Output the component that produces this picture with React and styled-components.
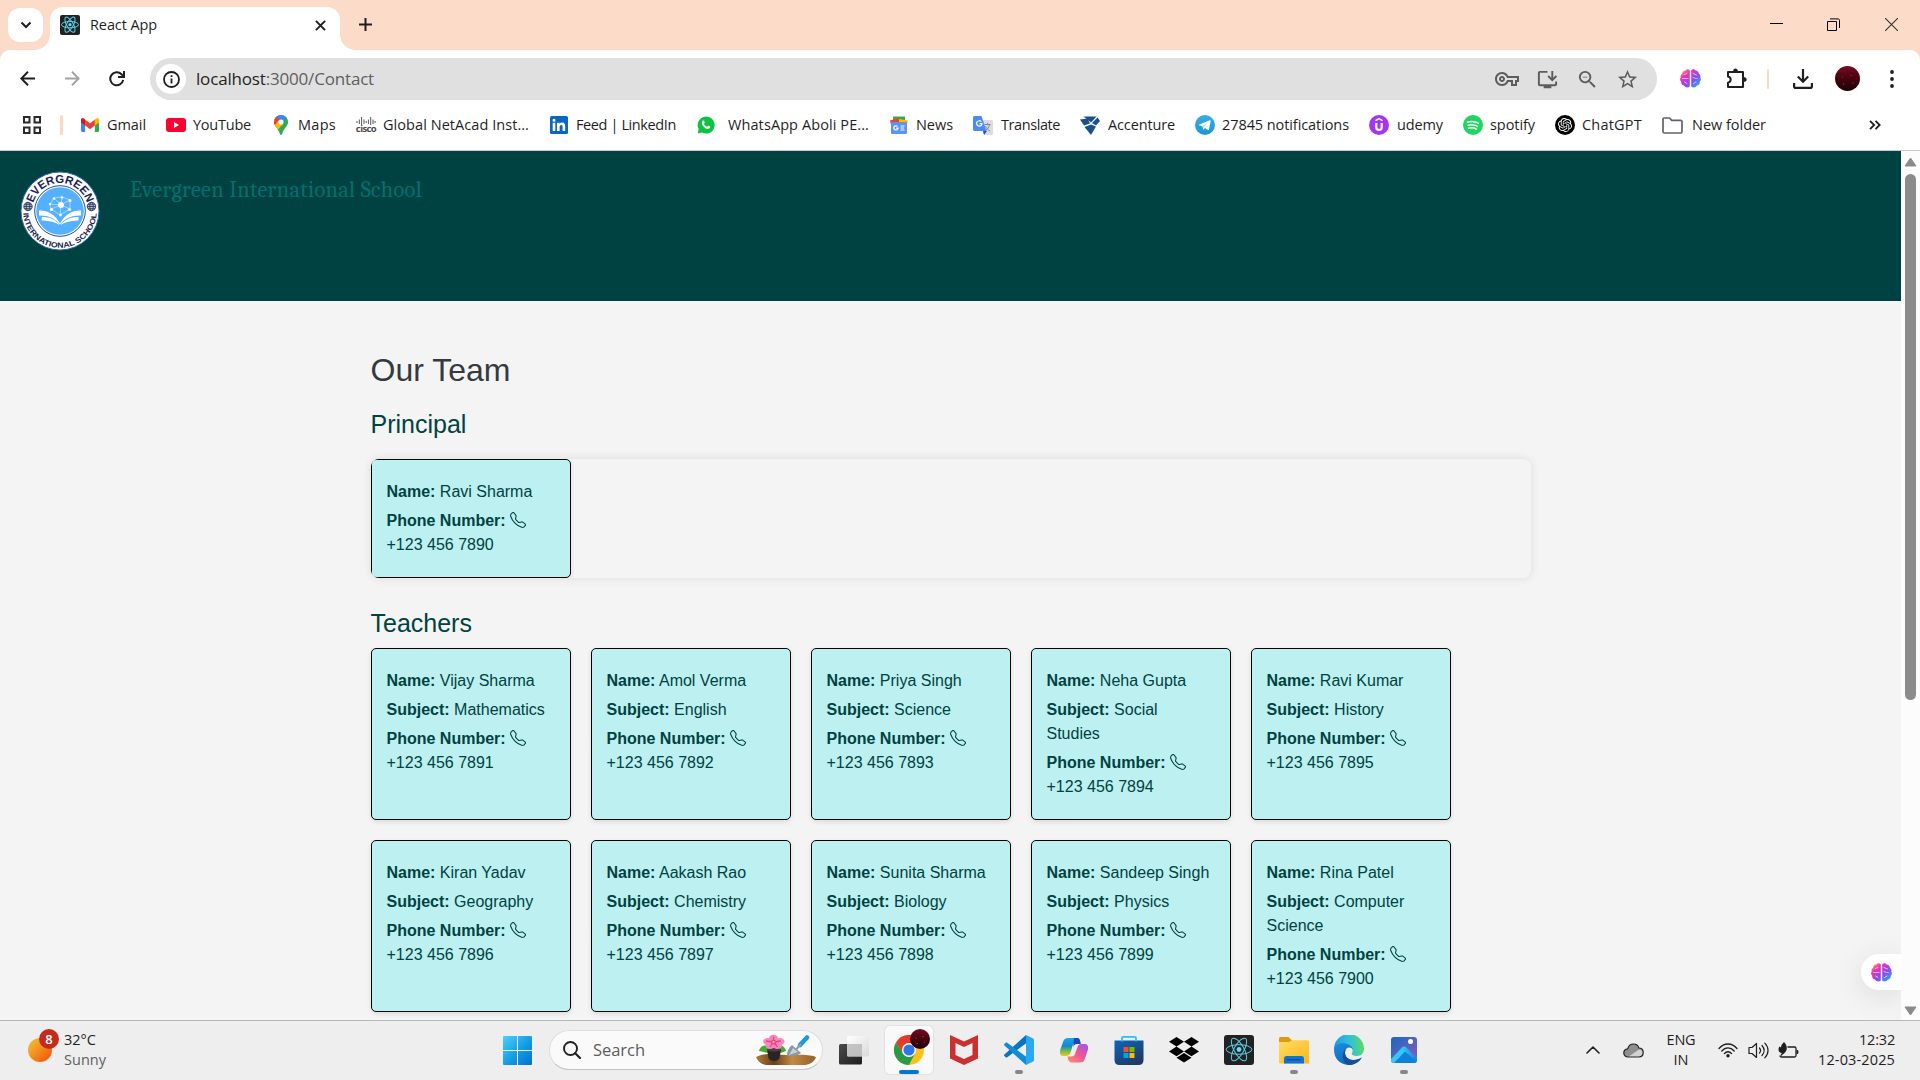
import React, { useLayoutEffect, useRef } from "react";
import styled, { createGlobalStyle, css } from "styled-components";
import { BsTelephone } from "react-icons/bs";
import { SiOpenai } from "react-icons/si";
import {
  MdStarBorder,
  MdOutlineVpnKey,
  MdZoomOut,
  MdInstallDesktop,
} from "react-icons/md";

const UI_FONT = `"Segoe UI", "Open Sans", "Noto Sans", sans-serif`;

const GlobalStyle = createGlobalStyle`
  *, *::before, *::after { box-sizing: border-box; }
  html, body { margin: 0; padding: 0; overflow: hidden; }
  svg { display: block; flex: none; }
`;

/* ---------- shared ---------- */

const FitSpan = styled.span`
  display: inline-block;
  white-space: nowrap;
  font-size: ${(p) => p.$size}px;
  line-height: ${(p) => p.$line || 20}px;
  color: ${(p) => p.$color || "#1f1f1f"};
  font-family: ${(p) => p.$font || UI_FONT};
`;

const FitBox = styled.span`
  display: block;
  flex: none;
  width: ${(p) => p.$w}px;
  white-space: nowrap;
`;

/* Tracks its text so that the label takes up exactly the given width. */
function Fit({ w, size, color, line, font, children }) {
  const ref = useRef(null);
  useLayoutEffect(() => {
    const el = ref.current;
    el.style.letterSpacing = "0px";
    const natural = el.getBoundingClientRect().width;
    el.style.letterSpacing = `${(w - natural) / el.textContent.length}px`;
  }, [w]);
  return (
    <FitBox $w={w}>
      <FitSpan ref={ref} $size={size} $color={color} $line={line} $font={font}>
        {children}
      </FitSpan>
    </FitBox>
  );
}

const Slot = styled.div`
  display: flex;
  align-items: center;
  justify-content: center;
  flex: none;
  width: ${(p) => p.$w || 25}px;
  height: ${(p) => p.$h || 25}px;
  margin-left: ${(p) => p.$ml || 0}px;
  margin-top: ${(p) => p.$mt || 0}px;
`;

const Screen = styled.div`
  width: 1920px;
  height: 1080px;
  display: flex;
  flex-direction: column;
  overflow: hidden;
  background: #f4f4f4;
`;

/* ---------- icons ---------- */

const ReactLogo = ({ size, sw }) => (
  <svg width={size} height={size} viewBox="0 0 30 30">
    <rect width="30" height="30" rx="3" fill="#222" />
    <g fill="none" stroke="#5ccfe6" strokeWidth={sw}>
      <ellipse cx="15" cy="14.5" rx="12.8" ry="4.8" />
      <ellipse cx="15" cy="14.5" rx="12.8" ry="4.8" transform="rotate(60 15 14.5)" />
      <ellipse cx="15" cy="14.5" rx="12.8" ry="4.8" transform="rotate(120 15 14.5)" />
    </g>
    <circle cx="15" cy="14.5" r="2.4" fill="#61dafb" />
  </svg>
);

const Brain = ({ id }) => (
  <svg width="21" height="19" viewBox="0 0 21 19">
    <defs>
      <linearGradient id={id} x1="0" y1="0" x2="1" y2="1">
        <stop offset="0.08" stopColor="#f9a03c" />
        <stop offset="0.3" stopColor="#ee2fc0" />
        <stop offset="0.6" stopColor="#8a4bf0" />
        <stop offset="0.9" stopColor="#2ba4ff" />
      </linearGradient>
    </defs>
    <path
      fill={`url(#${id})`}
      d="M9.8 1.2C8.6-.2 6.3-.1 5.5 1.4 3.6 1.3 2 2.9 2.2 4.8.8 5.6.2 7.1.7 8.6-.3 10 0 11.8 1.2 12.8 1 14.7 2.3 16.2 4 16.5 5 18.6 8.2 19.200 9.800 17.500ZM11.200 1.200C12.400-.2 14.700-.1 15.500 1.400 17.400 1.300 19 2.900 18.800 4.800 20.200 5.600 20.800 7.100 20.300 8.600 21.300 10 21 11.800 19.800 12.800 20 14.700 18.700 16.200 17 16.500 16 18.600 12.800 19.200 11.200 17.500Z"
    />
    <path
      fill="none"
      stroke="#fff"
      strokeOpacity=".7"
      strokeWidth=".9"
      strokeLinecap="round"
      d="M2.500 9.500H8M4.500 5.500L7 4.500M4.500 13L7 14.500M13 4.500L16.500 6M13 8.500C15 10 16 9 17.500 9.500M13.500 14.500L16 13"
    />
  </svg>
);

const GmailIcon = () => (
  <svg width="18" height="14" viewBox="0 0 18 14">
    <path fill="#4285f4" d="M0 3v9.800C0 13.500.5 14 1.200 14H4.100V5.500Z" />
    <path fill="#34a853" d="M18 3v9.800c0 .7-.5 1.200-1.200 1.200H13.900V5.500Z" />
    <path fill="#ea4335" d="M4.100 7.500V1.600L9 5.300l4.900-3.700v5.900L9 11.200Z" />
    <path fill="#c5221f" d="M0 1.800C0 .2 1.800-.6 3.100.7L4.100 1.600V7.500L0 4.400Z" />
    <path fill="#fbbc04" d="M18 1.800C18 .2 16.200-.6 14.900.7l-1 .9V7.500L18 4.400Z" />
  </svg>
);

const YouTubeIcon = () => (
  <svg width="20" height="14" viewBox="0 0 20 14">
    <rect width="20" height="14" rx="3" fill="#ff0033" />
    <path d="M8 4v6l5-3Z" fill="#fff" />
  </svg>
);

const MapsIcon = () => (
  <svg width="14" height="20" viewBox="0 0 14 20">
    <defs>
      <clipPath id="pin">
        <path d="M7 0a7 7 0 0 1 7 7c0 4-3.300 5.600-5 9.500C8.200 18.400 8 20 7 20s-1.200-1.600-2-3.500C3.300 12.600 0 11 0 7a7 7 0 0 1 7-7Z" />
      </clipPath>
    </defs>
    <g clipPath="url(#pin)">
      <rect width="14" height="20" fill="#34a853" />
      <path d="M0 0H14V3L9 9 4 5 0 2Z" fill="#4285f4" />
      <path d="M13 1L14 8 4 17 8 9Z" fill="#34a853" />
      <path d="M-1 2L2 1.500 7 6 1 13-1 9Z" fill="#ea4335" />
      <path d="M0 11L5 5 9 9 3 15.500Z" fill="#fbbc04" />
    </g>
    <circle cx="7" cy="7" r="2.600" fill="#fff" />
  </svg>
);

const CiscoText = styled.span`
  font: bold 9.5px/8px "Open Sans", sans-serif;
  letter-spacing: -0.6px;
  color: #4a4a4a;
`;
const CiscoBox = styled.span`
  display: flex;
  flex-direction: column;
  align-items: center;
`;
const CiscoIcon = () => (
  <CiscoBox>
    <svg width="20" height="8" viewBox="0 0 20 8">
      <path
        d="M1 4v2M3.300 2.500V7M5.600 0V8M8 2.500V7M10.200 4V6M12.400 2.500V7M14.700 0V8M17 2.500V7M19 4V6"
        stroke="#555"
        strokeWidth="1"
      />
    </svg>
    <CiscoText>cisco</CiscoText>
  </CiscoBox>
);

const LinkedInIcon = () => (
  <svg width="18" height="18" viewBox="0 0 18 18">
    <rect width="18" height="18" rx="1.500" fill="#0a66c2" />
    <path
      fill="#fff"
      d="M2.700 6.800h2.600V15H2.700ZM4 2.700a1.500 1.500 0 1 1 0 3 1.500 1.500 0 0 1 0-3ZM7 6.800h2.500v1.100C9.900 7.200 10.800 6.600 12 6.600c2.600 0 3.200 1.700 3.200 4V15h-2.600v-3.900c0-1-.1-2.200-1.400-2.200S9.600 10 9.600 11v4H7Z"
    />
  </svg>
);

const WhatsIcon = () => (
  <svg width="18" height="18" viewBox="0 0 18 18">
    <path d="M.6 17.600L1.700 13.200A8.500 8.500 0 1 1 5 16.500Z" fill="#0fc143" />
    <path
      d="M6.200 4.500c.5-.1.700.1.900.6l.6 1.400c.1.400-.6 1-.8 1.300.6 1.300 1.600 2.300 3.200 3 .4-.4.900-1.200 1.300-1.100l1.800.9c.3.600-.3 2.300-2.200 2.400C8 12.900 4.900 9.400 4.900 6.700c0-1.100.6-2 1.300-2.200Z"
      fill="#fff"
    />
  </svg>
);

const NewsIcon = () => (
  <svg width="18" height="18" viewBox="0 0 18 18">
    <path d="M3 .5h12v6H3Z" fill="#34a853" />
    <path d="M0 4.500L9 2l1 4-9 3Z" fill="#ea4335" />
    <path d="M9 3L18 4.500l-1 4-8-2Z" fill="#fbbc04" />
    <rect x="1" y="6" width="16" height="12" rx="1.200" fill="#5b94f5" />
    <path
      d="M7.500 10.500a2.100 2.100 0 1 0 .5 1.600H6.200M10.500 10H14.500M10.500 12H14M10.500 14H14.500"
      fill="none"
      stroke="#fff"
      strokeWidth="1.200"
    />
  </svg>
);

const TranslateIcon = () => (
  <svg width="20" height="19" viewBox="0 0 20 19">
    <path d="M7 4h11.500c.8 0 1.500.6 1.500 1.400V17.500c0 .8-.7 1.400-1.500 1.400H11Z" fill="#dcdcdc" />
    <path d="M11.500 8.500h6M14.500 7v1.500M16.500 8.500c-.5 3-2 4.500-4 6M12.500 10c1 2.500 2.500 4 4.500 5" fill="none" stroke="#7b8794" strokeWidth="1" />
    <path d="M10 15h4l-3 4Z" fill="#3246c8" />
    <path d="M1.400 0H8.500L13.500 15H1.400C.6 15 0 14.400 0 13.600V1.400C0 .6.600 0 1.400 0Z" fill="#4c8bf5" />
    <path d="M8.300 5.600a2.700 2.700 0 1 0 .7 2H6.500" fill="none" stroke="#fff" strokeWidth="1.200" />
  </svg>
);

const AccentureIcon = () => (
  <svg width="20" height="19" viewBox="0 0 20 19">
    <g fill="#1c4f8f">
      <path d="M3.500.5H16.500L11 6.500Z" />
      <path d="M0 3.500L7.500 2.500 10 7.500 4 9.500Z" />
      <path d="M17.500 1.500L20 5 16 9.500 12 7Z" />
      <path d="M4.500 11L11 8.500 16 10.500 11 19Z" />
    </g>
  </svg>
);

const Disc = styled.span`
  display: flex;
  align-items: center;
  justify-content: center;
  width: 20px;
  height: 20px;
  border-radius: 50%;
  background: ${(p) => p.$bg};
  color: #fff;
`;

const TelegramIcon = () => (
  <Disc $bg="linear-gradient(#37aee2,#1e96d4)">
    <svg width="20" height="20" viewBox="0 0 20 20">
      <path
        fill="#fff"
        d="M4 9.700L14.800 5.300c.6-.2 1 .1.900.8l-1.800 8.500c-.1.600-.6.700-1 .4L10.100 13l-1.400 1.400c-.2.200-.4.200-.5-.2L7.300 11.200 4 10.300c-.4-.1-.4-.4 0-.6Z"
      />
      <path d="M7.800 11L13.300 7.300 9 11.700 8.500 13.500Z" fill="#a9d3ec" />
    </svg>
  </Disc>
);

const UdemyIcon = () => (
  <Disc $bg="#a435f0">
    <svg width="20" height="20" viewBox="0 0 20 20">
      <path d="M6.500 5.700L10 3.700l3.500 2" fill="none" stroke="#fff" strokeWidth="1.500" />
      <path d="M7.300 8v4.300a2.700 2.700 0 0 0 5.400 0V8" fill="none" stroke="#fff" strokeWidth="2.200" />
    </svg>
  </Disc>
);

const SpotifyIcon = () => (
  <Disc $bg="#1ed760">
    <svg width="20" height="20" viewBox="0 0 20 20">
      <path
        d="M4.500 7.300c4-1.200 7.700-.8 11 1M5 10.400c3.300-1 6.600-.6 9.400 1M5.500 13.300c2.800-.8 5.400-.5 7.900.9"
        fill="none"
        stroke="#fff"
        strokeWidth="1.500"
        strokeLinecap="round"
      />
    </svg>
  </Disc>
);

const ChatGptIcon = () => (
  <Disc $bg="#000">
    <SiOpenai size={14} />
  </Disc>
);

const FolderOutline = () => (
  <svg width="21" height="17" viewBox="0 0 21 17">
    <path
      d="M1 14.300V2.300C1 1.600 1.500 1 2.200 1H7.500L9.700 3.400h8.900c.8 0 1.400.6 1.400 1.300v9.600c0 .9-.6 1.700-1.400 1.700H2.400C1.600 16 1 15.200 1 14.300Z"
      fill="none"
      stroke="#5f6368"
      strokeWidth="1.700"
    />
  </svg>
);

const GardenAvatar = styled.span`
  display: block;
  width: ${(p) => p.$d}px;
  height: ${(p) => p.$d}px;
  border-radius: 50%;
  background:
    radial-gradient(circle at 35% 72%, #8a1828 0 0.5px, transparent 1px),
    radial-gradient(circle at 65% 38%, #9c1c32 0 0.5px, transparent 1px),
    radial-gradient(circle at 72% 68%, #7c1422 0 0.5px, transparent 1px),
    radial-gradient(circle at 30% 45%, #861626 0 0.5px, transparent 1px),
    linear-gradient(#780c20, #4b0410 45%, #1c0205);
`;

/* ---------- browser chrome ---------- */

const TabStrip = styled.div`
  height: 50px;
  flex: none;
  display: flex;
  align-items: flex-start;
  padding-left: 8px;
  background: #fcdbc8;
`;

const TabSearch = styled.div`
  width: 35px;
  height: 34px;
  margin-top: 8px;
  border-radius: 12px;
  background: #fff;
  display: flex;
  align-items: center;
  justify-content: center;
`;

const curve = css`
  content: "";
  position: absolute;
  bottom: 0;
  width: 15px;
  height: 15px;
`;

const Tab = styled.div`
  position: relative;
  width: 290px;
  height: 43px;
  margin: 7px 0 0 7px;
  padding: 0 14px 7px 10px;
  border-radius: 13px 13px 0 0;
  background: #fff;
  display: flex;
  align-items: center;
  &::before {
    ${curve}
    left: -15px;
    background: radial-gradient(circle at 0 0, transparent 14.5px, #fff 15px);
  }
  &::after {
    ${curve}
    right: -15px;
    background: radial-gradient(circle at 100% 0, transparent 14.5px, #fff 15px);
  }
`;

const TabTitle = styled.div`
  flex: 1;
  padding-left: 10px;
`;

const WindowControls = styled.div`
  display: flex;
  margin: 12px 16px 0 auto;
  gap: 32px;
`;

const ToolbarBack = styled.div`
  flex: none;
  background: #fcdbc8;
`;

const Toolbar = styled.div`
  height: 101px;
  border-radius: 10px 10px 0 0;
  border-bottom: 1px solid #c9c9c9;
  background: #fff;
`;

const NavRow = styled.div`
  height: 50px;
  padding: 8px 0 0 15px;
  display: flex;
  align-items: flex-start;
`;

const NavButtons = styled.div`
  display: flex;
  gap: 20px;
  height: 41px;
  align-items: center;
`;

const UrlBar = styled.div`
  width: 1507px;
  height: 42px;
  margin-left: 20px;
  padding: 0 18px 0 6px;
  border-radius: 21px;
  background: #e0e0e0;
  display: flex;
  align-items: center;
`;

const InfoDisc = styled.div`
  width: 30px;
  height: 30px;
  border-radius: 50%;
  background: #fff;
  display: flex;
  align-items: center;
  justify-content: center;
`;

const UrlText = styled.div`
  flex: 1;
  padding: 0 0 0 10px;
`;

const Grey = styled.span`
  color: #5e5e5e;
`;

const UrlIcons = styled.div`
  display: flex;
  gap: 16px;
  color: #5c5c5c;
`;

const Divider = styled.div`
  width: ${(p) => p.$w || 2}px;
  height: 20px;
  border-radius: 2px;
  background: #fcd7c1;
  margin-left: ${(p) => p.$ml}px;
`;

const Actions = styled.div`
  display: flex;
  align-items: center;
  height: 41px;
`;

const Bookmarks = styled.div`
  height: 50px;
  padding-left: 20px;
  display: flex;
  align-items: center;
`;

const BookmarkList = styled.div`
  display: flex;
  gap: 20px;
  margin-left: 17px;
`;

const Bookmark = styled.div`
  display: flex;
  align-items: center;
  gap: ${(p) => p.$gap || 7}px;
`;

const bookmarks = [
  { icon: <GmailIcon />, name: "Gmail", w: 39 },
  { icon: <YouTubeIcon />, name: "YouTube", w: 58 },
  { icon: <MapsIcon />, name: "Maps", w: 38 },
  { icon: <CiscoIcon />, name: "Global NetAcad Inst...", w: 146 },
  { icon: <LinkedInIcon />, name: "Feed | LinkedIn", w: 100 },
  { icon: <WhatsIcon />, name: "WhatsApp Aboli PE...", w: 141, gap: 12 },
  { icon: <NewsIcon />, name: "News", w: 37 },
  { icon: <TranslateIcon />, name: "Translate", w: 59, gap: 8 },
  { icon: <AccentureIcon />, name: "Accenture", w: 67, gap: 8 },
  { icon: <TelegramIcon />, name: "27845 notifications", w: 127, gap: 7 },
  { icon: <UdemyIcon />, name: "udemy", w: 46, gap: 8 },
  { icon: <SpotifyIcon />, name: "spotify", w: 45, gap: 7 },
  { icon: <ChatGptIcon />, name: "ChatGPT", w: 60, gap: 7 },
  { icon: <FolderOutline />, name: "New folder", w: 74, gap: 10 },
];

const Stroke = ({ w, h, d, color = "#1f1f1f", sw = 2, join = "miter", cap = "butt" }) => (
  <svg width={w} height={h} viewBox={`0 0 ${w} ${h}`}>
    <path d={d} fill="none" stroke={color} strokeWidth={sw} strokeLinejoin={join} strokeLinecap={cap} />
  </svg>
);

function BrowserChrome() {
  return (
    <>
      <TabStrip>
        <TabSearch>
          <Stroke w={12} h={8} d="M1.500 1.500L6 6l4.500-4.500" />
        </TabSearch>
        <Tab>
          <ReactLogo size={20} sw={1.5} />
          <TabTitle>
            <Fit w={67} size={14.5}>React App</Fit>
          </TabTitle>
          <Stroke w={11} h={11} d="M.9.9l9.200 9.200M10.100.9L.9 10.100" />
        </Tab>
        <Slot $w={25} $h={25} $ml={13} $mt={12}>
          <Stroke w={13} h={13} d="M6.500 0v13M0 6.500h13" />
        </Slot>
        <WindowControls>
          <Slot>
            <Stroke w={13} h={13} sw={1} color="#000" d="M0 5.500h13" />
          </Slot>
          <Slot>
            <Stroke w={13} h={13} sw={1} color="#000" d="M.5 3.500h9v9h-9ZM3 .9h8c1 0 1.500.5 1.500 1.500v7.600" />
          </Slot>
          <Slot $ml={1}>
            <Stroke w={13} h={13} sw={1.1} color="#333" d="M0 0l13 13M13 0L0 13" />
          </Slot>
        </WindowControls>
      </TabStrip>
      <ToolbarBack>
        <Toolbar>
          <NavRow>
            <NavButtons>
              <Slot>
                <Stroke w={15} h={15} d="M15 7.500H1.500M8 .8L1.300 7.500 8 14.200" />
              </Slot>
              <Slot>
                <Stroke w={15} h={15} color="#a3a3a3" d="M0 7.500h13.500M7 .8l6.700 6.700L7 14.200" />
              </Slot>
              <Slot>
                <Stroke w={17} h={16} d="M14.200 8.900A6.500 6.500 0 1 1 12.500 3.300L14.800 5.600M15 0V6H9" />
              </Slot>
            </NavButtons>
            <UrlBar>
              <InfoDisc>
                <svg width="17" height="17" viewBox="0 0 17 17">
                  <circle cx="8.500" cy="8.500" r="7.500" fill="none" stroke="#1f1f1f" strokeWidth="1.800" />
                  <path d="M8.500 7.500v5M8.500 4.200v1.900" stroke="#1f1f1f" strokeWidth="1.800" />
                </svg>
              </InfoDisc>
              <UrlText>
                <Fit w={178} size={17} line={24}>
                  localhost<Grey>:3000/Contact</Grey>
                </Fit>
              </UrlText>
              <UrlIcons>
                <Slot $w={24}>
                  <MdOutlineVpnKey size={24} />
                </Slot>
                <Slot $w={24}>
                  <MdInstallDesktop size={23} />
                </Slot>
                <Slot $w={24}>
                  <MdZoomOut size={23} />
                </Slot>
                <Slot $w={24}>
                  <MdStarBorder size={23} />
                </Slot>
              </UrlIcons>
            </UrlBar>
            <Actions>
              <Slot $ml={21}>
                <Brain id="brainTop" />
              </Slot>
              <Slot $ml={21}>
                <svg width="21" height="21" viewBox="0 0 21 21">
                  <path
                    d="M2 4H17V19H2V14.800C5.600 14 5.600 9.200 2 8.400Z"
                    fill="none"
                    stroke="#1f1f1f"
                    strokeWidth="2"
                    strokeLinejoin="round"
                  />
                  <path d="M7 4C6.800-.8 12.200-.8 12 4ZM17 9.100c4.900-.2 4.900 5 0 4.800Z" fill="#1f1f1f" />
                </svg>
              </Slot>
              <Divider $ml={18} />
              <Slot $ml={21}>
                <Stroke w={20} h={20} sw={2.2} d="M10 0v12.500M4.800 7.500L10 12.700l5.200-5.200M1.100 14v3.200c0 1 .7 1.700 1.700 1.700h14.400c1 0 1.700-.7 1.700-1.700V14" />
              </Slot>
              <Slot $ml={20}>
                <GardenAvatar $d={25} />
              </Slot>
              <Slot $ml={19}>
                <svg width="4" height="18" viewBox="0 0 4 18">
                  <g fill="#1f1f1f">
                    <circle cx="2" cy="2" r="1.900" />
                    <circle cx="2" cy="9" r="1.900" />
                    <circle cx="2" cy="16" r="1.900" />
                  </g>
                </svg>
              </Slot>
            </Actions>
          </NavRow>
          <Bookmarks>
            <Slot>
              <Stroke w={19} h={18} sw={2} color="#2a2a2a" d="M1 1h5.500v5.500H1ZM11.500 1H17v5.500h-5.500ZM1 11.500h5.500V17H1ZM11.500 11.500H17V17h-5.500Z" />
            </Slot>
            <Divider $ml={15} $w={3} />
            <BookmarkList>
              {bookmarks.map((b) => (
                <Bookmark key={b.name} $gap={b.gap}>
                  <Slot $w={20} $h={20}>
                    {b.icon}
                  </Slot>
                  <Fit w={b.w} size={14.5}>
                    {b.name}
                  </Fit>
                </Bookmark>
              ))}
            </BookmarkList>
            <Slot $ml={96}>
              <Stroke w={12} h={10} sw={1.8} d="M1 .8L5.200 5 1 9.200M6.500.8L10.700 5 6.500 9.200" />
            </Slot>
          </Bookmarks>
        </Toolbar>
      </ToolbarBack>
    </>
  );
}

/* ---------- school site ---------- */

const Viewport = styled.div`
  position: relative;
  display: flex;
  height: 869px;
  flex: none;
  overflow: hidden;
`;

const Site = styled.div`
  width: 1901px;
  background: #f4f4f4;
  font-family: "Liberation Sans", Arial, sans-serif;
  font-size: 16px;
  line-height: 24px;
  color: #004242;
`;

const SiteHeader = styled.header`
  height: 150px;
  padding: 20px;
  display: flex;
  align-items: flex-start;
  gap: 30px;
  background: #004242;
`;

const SchoolName = styled.div`
  padding-top: 3px;
`;

const Team = styled.main`
  width: 1160px;
  margin: 0 auto;
  padding-top: 50px;
`;

const PageTitle = styled.h1`
  margin: 0;
  font-size: 32px;
  font-weight: 400;
  line-height: 38px;
  color: #343a40;
`;

const SectionTitle = styled.h2`
  margin: ${(p) => p.$top}px 0 ${(p) => p.$bottom}px;
  font-size: 25px;
  font-weight: 400;
  line-height: 30px;
  color: #004242;
`;

const PrincipalPanel = styled.section`
  display: flex;
  overflow: hidden;
  border-radius: 8px;
  box-shadow: 0 0 10px rgba(0, 0, 0, 0.1);
`;

const CardGrid = styled.section`
  display: grid;
  grid-template-columns: repeat(5, 200px);
  gap: 20px;
`;

const Card = styled.article`
  width: 200px;
  padding: 15px 16px 15px 15px;
  border: 1px solid #000;
  border-radius: 5px;
  background: #bdf0f0;
  box-shadow: 0 2px 5px rgba(0, 0, 0, 0.1);
`;

const Field = styled.p`
  margin: 5px 0;
`;

const PhoneIcon = styled(BsTelephone)`
  display: inline-block;
  vertical-align: -2px;
`;

const teachers = [
  ["Vijay Sharma", "Mathematics", "7891"],
  ["Amol Verma", "English", "7892"],
  ["Priya Singh", "Science", "7893"],
  ["Neha Gupta", "Social Studies", "7894"],
  ["Ravi Kumar", "History", "7895"],
  ["Kiran Yadav", "Geography", "7896"],
  ["Aakash Rao", "Chemistry", "7897"],
  ["Sunita Sharma", "Biology", "7898"],
  ["Sandeep Singh", "Physics", "7899"],
  ["Rina Patel", "Computer Science", "7900"],
];

function Person({ name, subject, phone }) {
  return (
    <Card>
      <Field>
        <strong>Name:</strong> {name}
      </Field>
      {subject && (
        <Field>
          <strong>Subject:</strong> {subject}
        </Field>
      )}
      <Field>
        <strong>Phone Number:</strong> <PhoneIcon size={16} /> +123 456 {phone}
      </Field>
    </Card>
  );
}

const LOGO_FONT = `"Liberation Sans Narrow", "Liberation Sans", sans-serif`;

const SchoolLogo = () => (
  <svg width="80" height="80" viewBox="0 0 80 80">
    <defs>
      <path id="arcTop" d="M12 40a28 28 0 0 1 56 0" />
      <path id="arcBottom" d="M3.200 40a36.800 36.800 0 0 0 73.600 0" />
    </defs>
    <circle cx="40" cy="40" r="39" fill="#fff" stroke="#2f6db0" strokeWidth="1" />
    <circle cx="40" cy="40" r="25.300" fill="#fff" stroke="#1d4f91" strokeWidth="1" />
    <circle cx="40" cy="40" r="23.800" fill="#55b1ff" />
    <text fontFamily={LOGO_FONT} fontWeight="bold" fontSize="11.5" fill="#1b2454">
      <textPath href="#arcTop" startOffset="8" textLength="72" lengthAdjust="spacingAndGlyphs">EVERGREEN</textPath>
    </text>
    <text fontFamily={LOGO_FONT} fontWeight="bold" fontSize="7.5" fill="#1b2454">
      <textPath href="#arcBottom" startOffset="2" textLength="111" lengthAdjust="spacingAndGlyphs">INTERNATIONAL SCHOOL</textPath>
    </text>
    {[8, 71.5].map((x) => (
      <g key={x} fill="none" stroke="#2c3a66" strokeWidth=".9">
        <circle cx={x} cy="35.500" r="4.200" fill="#b8bfd0" />
        <ellipse cx={x} cy="35.500" rx="1.800" ry="4.200" />
        <path d={`M${x - 4.2} 35.500h8.400M${x - 3.5} 33.300h7M${x - 3.5} 37.700h7`} />
      </g>
    ))}
    <g stroke="#d9eeff" strokeWidth=".6" fill="none">
      <path d="M30 33L34 27 42 26 50 29 50 38 40 44 31 38ZM30 33L41 34 50 29M34 27L41 34 42 26M50 38L41 34 31 38M41 34L40 44" />
    </g>
    <g fill="#fff">
      <circle cx="41" cy="34" r="3" />
      <circle cx="34" cy="27.500" r="1.300" />
      <circle cx="42" cy="26.500" r="1.300" />
      <circle cx="50" cy="29.500" r="1.500" />
      <circle cx="30" cy="33" r="1.200" />
      <circle cx="31.500" cy="38.500" r="1.600" />
      <circle cx="49.500" cy="38.500" r="1.600" />
      <circle cx="40.500" cy="44" r="1.400" />
      <path d="M19 39.500C27 39 35 43 40 52.500 45 43 53 39 61 39.500V44.500C53 44 45 47 40 53.500 35 47 27 44 19 44.500Z" />
      <path d="M22 46C30 46 36 48.500 39.500 54 34 50.500 28 49.500 21.500 49.500ZM58.500 46C50.500 46 44.500 48.500 40.500 54 46 50.500 52 49.500 58.500 49.500Z" />
    </g>
  </svg>
);

const Scrollbar = styled.div`
  width: 19px;
  background: #fcfcfc;
  display: flex;
  flex-direction: column;
  align-items: center;
  padding: 6px 0 4px;
`;

const Thumb = styled.div`
  width: 11px;
  height: 526px;
  margin: 7px 0 auto;
  border-radius: 6px;
  background: #8b8b8b;
`;

const Assistant = styled.div`
  position: absolute;
  right: 19px;
  bottom: 30px;
  width: 40px;
  height: 36px;
  padding-left: 9.5px;
  display: flex;
  align-items: center;
  border-radius: 18px 0 0 18px;
  background: #fff;
  box-shadow: 0 6px 30px rgba(0, 0, 0, 0.1);
  clip-path: inset(-60px 0 -60px -60px);
`;

function SchoolSite() {
  return (
    <Viewport>
      <Site>
        <SiteHeader>
          <SchoolLogo />
          <SchoolName>
            <Fit w={292} size={22.4} line={32} color="#007070" font={`Cambria, "DejaVu Serif Condensed", "DejaVu Serif", serif`}>
              Evergreen International School
            </Fit>
          </SchoolName>
        </SiteHeader>
        <Team>
          <PageTitle>Our Team</PageTitle>
          <SectionTitle $top={20} $bottom={20}>Principal</SectionTitle>
          <PrincipalPanel>
            <Person name="Ravi Sharma" phone="7890" />
          </PrincipalPanel>
          <SectionTitle $top={30} $bottom={10}>Teachers</SectionTitle>
          <CardGrid>
            {teachers.map(([name, subject, phone]) => (
              <Person key={phone} name={name} subject={subject} phone={phone} />
            ))}
          </CardGrid>
        </Team>
      </Site>
      <Scrollbar>
        <svg width="13" height="10" viewBox="0 0 13 10">
          <path d="M6.500 1L12 9H1Z" fill="#8b8b8b" stroke="#8b8b8b" strokeLinejoin="round" />
        </svg>
        <Thumb />
        <svg width="13" height="10" viewBox="0 0 13 10">
          <path d="M6.500 9L12 1H1Z" fill="#8b8b8b" stroke="#8b8b8b" strokeLinejoin="round" />
        </svg>
      </Scrollbar>
      <Assistant>
        <Brain id="brainFloat" />
      </Assistant>
    </Viewport>
  );
}

/* ---------- taskbar ---------- */

const Taskbar = styled.footer`
  height: 60px;
  flex: none;
  display: flex;
  align-items: center;
  padding-bottom: 1px;
  border-top: 1px solid #b8b8b8;
  background: #eee;
`;

const Weather = styled.div`
  width: 503px;
  padding-left: 28px;
  display: flex;
  align-items: center;
  gap: 12px;
`;

const Sun = styled.div`
  position: relative;
  width: 24px;
  height: 24px;
  border-radius: 50%;
  background: linear-gradient(135deg, #ecbf3c 10%, #f58a1c 50%, #f2600c 85%);
`;

const Badge = styled.div`
  position: absolute;
  left: 11px;
  top: -9px;
  width: 20px;
  height: 20px;
  border-radius: 50%;
  background: #c42b1c;
  color: #fff;
  font: 600 13px/20px ${UI_FONT};
  text-align: center;
`;

const Lines = styled.div`
  display: flex;
  flex-direction: column;
  flex: none;
  align-items: ${(p) => p.$align || "flex-start"};
  width: ${(p) => (p.$w ? `${p.$w}px` : "auto")};
  margin-left: ${(p) => p.$ml || 0}px;
  padding-bottom: 1px;
`;

const SearchBox = styled.div`
  width: 274px;
  height: 40px;
  margin: 0 7px 0 17px;
  padding: 0 6px 0 13px;
  display: flex;
  align-items: center;
  border: 1px solid #dedede;
  border-bottom-color: #c4c4c4;
  border-radius: 20px;
  background: #fafafa;
`;

const SearchLabel = styled.div`
  flex: 1;
  padding-left: 12px;
`;

const Apps = styled.div`
  display: flex;
  gap: 7px;
`;

const AppTile = styled.div`
  position: relative;
  width: 48px;
  height: 48px;
  display: flex;
  align-items: center;
  justify-content: center;
  border-radius: 5px;
  ${(p) =>
    p.$active &&
    css`
      background: #f9f9f9;
      box-shadow: 0 0 0 1px #e2e2e2;
    `}
  &::after {
    content: "";
    position: absolute;
    bottom: 0;
    width: ${(p) => (p.$active ? 20 : p.$open ? 8 : 0)}px;
    height: 4px;
    border-radius: 2px;
    background: ${(p) => (p.$active ? "#0078d4" : "#868686")};
  }
`;

const TileAvatar = styled.div`
  position: absolute;
  right: 3px;
  top: 3px;
`;

const Tray = styled.div`
  display: flex;
  align-items: center;
  margin-left: 153px;
`;

const WindowsLogo = () => (
  <svg width="29" height="29" viewBox="0 0 29 29">
    <defs>
      <linearGradient id="win" x1="0" y1="0" x2="1" y2="1">
        <stop offset="0" stopColor="#4cd0ff" />
        <stop offset=".55" stopColor="#139be3" />
        <stop offset="1" stopColor="#0070d0" />
      </linearGradient>
    </defs>
    <path fill="url(#win)" d="M1 0h13v14H0V1Q0 0 1 0ZM15 0h13q1 0 1 1v13H15ZM0 15h14v14H1q-1 0-1-1ZM15 15h14v13q0 1-1 1H15Z" />
  </svg>
);

const GardenArt = () => (
  <svg width="60" height="32" viewBox="0 0 60 32">
    <defs>
      <linearGradient id="soil" x1="0" x2="1">
        <stop offset="0" stopColor="#b07a3a" />
        <stop offset=".3" stopColor="#6a4018" />
        <stop offset=".6" stopColor="#c28a45" />
        <stop offset="1" stopColor="#94602a" />
      </linearGradient>
    </defs>
    <path d="M0 23C8 18 20 21 30 21S52 20 60 23C58 29 52 31 48 31H12C6 31 2 28 0 23Z" fill="url(#soil)" />
    <path d="M3 17C4 12 8 10 14 13L12 19ZM30 17C29 12 24 10 20 14L22 20Z" fill="#49a832" />
    <path d="M11 15H25L23.500 24C22 28 14 28 12.500 24Z" fill="#2a2426" />
    <ellipse cx="18" cy="15.500" rx="7" ry="2.200" fill="#4b4040" />
    <g fill="#f788bd">
      <ellipse cx="17.500" cy="4.500" rx="4.600" ry="3.800" />
      <ellipse cx="11.800" cy="7.500" rx="4.600" ry="3.600" />
      <ellipse cx="23.800" cy="7.500" rx="4.600" ry="3.600" />
      <ellipse cx="14" cy="11.500" rx="4.400" ry="3.400" />
      <ellipse cx="21.500" cy="11.500" rx="4.400" ry="3.400" />
    </g>
    <path d="M17.500 8L17.500 2.500M17.500 8L10 7M17.500 8L25 7M17.500 8L14 13M17.500 8L21.500 13" stroke="#e8468f" strokeWidth="1.300" />
    <circle cx="17.500" cy="8" r="2.600" fill="#e8468f" />
    <circle cx="17.500" cy="8" r="1.100" fill="#ffd35a" />
    <path d="M51 3.500L44 11" stroke="#2196e8" strokeWidth="4.600" strokeLinecap="round" />
    <path d="M45 10L40 15.500" stroke="#8f9aa5" strokeWidth="2" />
    <path d="M36 11L45 19C41 22 36 23 31 21.500 31 17 33 13.500 36 11Z" fill="#8797a6" />
    <path d="M37 14L42 18 33 21Z" fill="#c5d0d9" />
  </svg>
);

const TaskView = () => (
  <svg width="30" height="29" viewBox="0 0 30 29">
    <defs>
      <linearGradient id="tvDark" x1="0" y1="0" x2="1" y2="1">
        <stop offset="0" stopColor="#4a4a4a" />
        <stop offset="1" stopColor="#1d1d1d" />
      </linearGradient>
      <linearGradient id="tvLight" x1="0" y1="0" x2="1" y2="1">
        <stop offset="0" stopColor="#fff" />
        <stop offset="1" stopColor="#d9d9d9" />
      </linearGradient>
    </defs>
    <rect y="8" width="23" height="20.500" rx="1.500" fill="url(#tvDark)" />
    <rect x="8" y="0" width="22" height="20.500" rx="1.500" fill="url(#tvLight)" />
    <path d="M8 8H23V20.500H9.500Q8 20.500 8 19Z" fill="#b3b3b3" opacity=".75" />
  </svg>
);

const Chrome = () => (
  <svg width="30" height="30" viewBox="0 0 30 30">
    <circle cx="15" cy="15" r="15" fill="#fcc21b" />
    <path d="M2 7.500L9.200 18.500 15 22 21 18.500 15 30A15 15 0 0 1 2 7.500Z" fill="#2a9a48" />
    <path d="M2 7.500A15 15 0 0 1 28.400 8.200H15L9 11.500 8.800 18Z" fill="#e33b2e" />
    <circle cx="15" cy="15" r="7" fill="#fff" />
    <circle cx="15" cy="15" r="5.600" fill="#2f74e8" />
  </svg>
);

const McAfee = () => (
  <svg width="28" height="30" viewBox="0 0 28 30">
    <path
      d="M0 0L14 6.500 28 0V23.500L14 30 0 23.500ZM5.500 8V20L14 24 22.500 20V8L14 12Z"
      fill="#c9302f"
      fillRule="evenodd"
    />
  </svg>
);

const VsCode = () => (
  <svg width="30" height="30" viewBox="0 0 30 30">
    <path d="M22 0L22.200 8.200 3.300 22.300C2.800 22.700 2.200 22.700 1.700 22.300L.4 21.100C-.1 20.600-.1 19.900.4 19.400Z" fill="#0a74be" />
    <path d="M22 30L22.200 21.800 3.300 7.700C2.800 7.300 2.200 7.300 1.700 7.700L.4 8.900C-.1 9.400-.1 10.100.4 10.600Z" fill="#118dd8" />
    <path d="M22 0L28.700 3.200C29.500 3.600 30 4.300 30 5.200V24.800C30 25.700 29.500 26.400 28.700 26.800L22 30Z" fill="#29a9f2" />
  </svg>
);

const Copilot = () => (
  <svg width="28" height="26" viewBox="0 0 28 26">
    <defs>
      <linearGradient id="cpA" x1="0" y1="0" x2="0" y2="1">
        <stop offset="0" stopColor="#17a7ee" />
        <stop offset=".45" stopColor="#1787c8" />
        <stop offset=".75" stopColor="#7dc043" />
        <stop offset="1" stopColor="#f5c51c" />
      </linearGradient>
      <linearGradient id="cpB" x1="1" y1="0" x2="0" y2="1">
        <stop offset="0" stopColor="#9a54f0" />
        <stop offset=".5" stopColor="#f0559a" />
        <stop offset="1" stopColor="#ff9560" />
      </linearGradient>
    </defs>
    <path d="M8 1H17C19.500 1 20 3 20.500 6H16C14 6 13 7 12.500 9L10.500 16C10 18 8 19 6 19H3C0 19-.5 16 .2 13L3 5C4 2 5.500 1 8 1Z" fill="url(#cpA)" />
    <path d="M14 1H17C19.500 1 20 3 20.800 7H17C15 7 14 8 13.300 10Z" fill="#1b49c4" />
    <path d="M20 25.500H12C9 25.500 8 23 7.500 19.500H11.500C13.500 19.500 14.500 18.500 15 17L17.500 10C18 8 19.500 7 21.500 7H25C28 7 28.500 10 27.800 13L25 21.500C24 24.500 22.500 25.500 20 25.500Z" fill="url(#cpB)" />
  </svg>
);

const Store = () => (
  <svg width="30" height="30" viewBox="0 0 30 30">
    <defs>
      <linearGradient id="store" x1="0" y1="0" x2=".6" y2="1">
        <stop offset="0" stopColor="#0d66bb" />
        <stop offset="1" stopColor="#203a66" />
      </linearGradient>
    </defs>
    <path d="M.5 5.500H29.500V25Q29.500 30 24.500 30H5.500Q.5 30 .5 25Z" fill="url(#store)" />
    <path d="M8 6.500V3Q8 1.800 9.500 1.800H20.500Q22 1.800 22 3V6.500" fill="none" stroke="#27c0f5" strokeWidth="1.800" />
    <path d="M9.500 12h5v5h-5Z" fill="#f25022" />
    <path d="M15.500 12h5v5h-5Z" fill="#7fba00" />
    <path d="M9.500 18h5v5h-5Z" fill="#00a4ef" />
    <path d="M15.500 18h5v5h-5Z" fill="#ffb900" />
  </svg>
);

const Dropbox = () => (
  <svg width="30" height="26" viewBox="0 0 30 26">
    <path
      fill="#000"
      d="M7.500 0L15 4.800 7.500 9.600 0 4.800ZM22.500 0L30 4.800 22.500 9.600 15 4.800ZM7.500 9.600L15 14.400 7.500 19.200 0 14.400ZM22.500 9.600L30 14.400 22.500 19.200 15 14.400ZM15 16L22.500 20.800 15 25.600 7.500 20.800Z"
    />
  </svg>
);

const Explorer = () => (
  <svg width="30" height="27" viewBox="0 0 30 27">
    <defs>
      <linearGradient id="fold" x1="0" y1="0" x2="1" y2="1">
        <stop offset="0" stopColor="#ffdc6b" />
        <stop offset="1" stopColor="#fcb713" />
      </linearGradient>
    </defs>
    <path d="M0 1.500Q0 0 1.500 0H9.500L13 3.500V8H0Z" fill="#de9a07" />
    <path d="M0 5H10L13 3.300H28.500Q30 3.300 30 5V26.500H1.500Q0 26.500 0 25Z" fill="url(#fold)" />
    <path d="M5 26.500V21.500Q5 19 7.500 19H22.500Q25 19 25 21.500V26.500Z" fill="#1172cf" />
    <path d="M8 22.700H22" stroke="#0a4e98" strokeWidth="1.200" />
  </svg>
);

const Edge = () => (
  <svg width="30" height="30" viewBox="0 0 30 30">
    <defs>
      <linearGradient id="edA" x1="0" y1=".4" x2="1" y2=".3">
        <stop offset="0" stopColor="#2397e0" />
        <stop offset=".5" stopColor="#2fc0dd" />
        <stop offset="1" stopColor="#5edb5b" />
      </linearGradient>
      <linearGradient id="edB" x1="0" y1="0" x2=".6" y2="1">
        <stop offset="0" stopColor="#1b8fdc" />
        <stop offset="1" stopColor="#0e62b8" />
      </linearGradient>
    </defs>
    <path d="M0 14.500A15 15 0 0 1 30 13.500C30.200 18 27 21 23 21 19 21 17.500 19.500 17.800 18.500 20 15 17.500 11 13 10.800Z" fill="url(#edA)" />
    <path d="M0 14.500C.5 10 5 7.500 9.500 8.300 14 8.800 18.500 11 19 15 17 11 11 12 11 17.500 11 25 20 27 26.500 23.500 22 30 14 31 8.500 28.500 3 26 0 21 0 14.500Z" fill="url(#edB)" />
    <path d="M11 17.500C11 25 20 27.200 28 22.300 25 28 19 30.500 14 30 8 27 7 19 11.800 13.500Z" fill="#134f9c" />
  </svg>
);

const Photos = () => (
  <svg width="26" height="26" viewBox="0 0 26 26">
    <defs>
      <linearGradient id="phA" x1="0" y1="0" x2="1" y2="1">
        <stop offset="0" stopColor="#1467c4" />
        <stop offset=".5" stopColor="#5563bd" />
        <stop offset="1" stopColor="#8c5bb8" />
      </linearGradient>
      <linearGradient id="phB" x1="0" y1="0" x2="1" y2="1">
        <stop offset="0" stopColor="#2fc3f5" />
        <stop offset="1" stopColor="#0f7cd8" />
      </linearGradient>
    </defs>
    <rect width="26" height="26" rx="3" fill="url(#phA)" />
    <path d="M0 22L11 10.500Q13 8.500 15 10.500L26 21.500V23Q26 26 23 26H3Q0 26 0 23Z" fill="#35c8f6" />
    <path d="M3 26L14 14.500 26 24Q25 26 23 26Z" fill="#1180db" />
    <path d="M12 12L15 10.500 26 21.500V24Z" fill="url(#phB)" />
    <circle cx="19.500" cy="4.500" r="2.500" fill="#fff" />
  </svg>
);

const apps = [
  { id: "taskview", icon: <TaskView /> },
  { id: "chrome", icon: <Chrome />, active: true },
  { id: "mcafee", icon: <McAfee /> },
  { id: "vscode", icon: <VsCode />, open: true },
  { id: "copilot", icon: <Copilot /> },
  { id: "store", icon: <Store /> },
  { id: "dropbox", icon: <Dropbox /> },
  { id: "react", icon: <ReactLogo size={30} sw={1} /> },
  { id: "explorer", icon: <Explorer />, open: true },
  { id: "edge", icon: <Edge /> },
  { id: "photos", icon: <Photos />, open: true },
];

function WindowsTaskbar() {
  return (
    <Taskbar>
      <Weather>
        <Sun>
          <Badge>8</Badge>
        </Sun>
        <Lines>
          <Fit w={32} size={14.5}>32°C</Fit>
          <Fit w={42} size={14.5} color="#606060">Sunny</Fit>
        </Lines>
      </Weather>
      <WindowsLogo />
      <SearchBox>
        <svg width="18" height="18" viewBox="0 0 18 18">
          <circle cx="7.500" cy="7.500" r="6.500" fill="none" stroke="#222" strokeWidth="1.900" />
          <path d="M12.200 12.200L17 17" stroke="#222" strokeWidth="2.200" strokeLinecap="round" />
        </svg>
        <SearchLabel>
          <Fit w={52} size={16.5} line={22} color="#5d5d5d">Search</Fit>
        </SearchLabel>
        <GardenArt />
      </SearchBox>
      <Apps>
        {apps.map((a) => (
          <AppTile key={a.id} $active={a.active} $open={a.open}>
            {a.icon}
            {a.active && (
              <TileAvatar>
                <GardenAvatar $d={20} />
              </TileAvatar>
            )}
          </AppTile>
        ))}
      </Apps>
      <Tray>
        <Slot $w={24}>
          <Stroke w={14} h={8} sw={1.6} d="M1 7l6-6 6 6" cap="round" join="round" />
        </Slot>
        <Slot $w={24} $ml={16}>
          <svg width="21" height="15" viewBox="0 0 21 15">
            <path d="M5 14C2.500 14 .8 12.300.8 10 .8 7.500 2.500 6 4.700 5.800 5.500 2.700 7.700 1 10.500 1c2.700 0 4.700 1.500 5.400 4 2.500 0 4.300 1.800 4.300 4.300C20.200 12 18.500 14 16 14Z" fill="#8f8f8f" />
            <path d="M5 14L16 6.500C19 7 20 8.500 20.200 10 20 12.500 18.500 14 16 14Z" fill="#d2d2d2" />
            <path d="M5 14C2.500 14 .8 12.300.8 10 .8 7.500 2.500 6 4.700 5.800 5.500 2.700 7.700 1 10.500 1c2.700 0 4.700 1.500 5.400 4 2.500 0 4.300 1.800 4.300 4.300C20.200 12 18.500 14 16 14Z" fill="none" stroke="#222" strokeWidth="1.200" />
          </svg>
        </Slot>
        <Lines $w={36} $ml={18} $align="center">
          <Fit w={29} size={14.5}>ENG</Fit>
          <Fit w={15} size={14.5}>IN</Fit>
        </Lines>
        <Slot $w={24} $ml={17}>
          <svg width="20" height="15" viewBox="0 0 20 15">
            <g fill="none" stroke="#1f1f1f" strokeWidth="1.300" strokeLinecap="round">
              <path d="M1 5.500C6-.5 14-.5 19 5.500" />
              <path d="M3.800 8C7.500 3.800 12.500 3.800 16.200 8" />
              <path d="M6.400 10.600c2-2.500 5.200-2.500 7.200 0" />
            </g>
            <circle cx="10" cy="12.800" r="1.700" fill="#1f1f1f" />
          </svg>
        </Slot>
        <Slot $w={24} $ml={6}>
          <svg width="21" height="17" viewBox="0 0 21 17">
            <g fill="none" stroke="#1f1f1f" strokeWidth="1.200" strokeLinecap="round" strokeLinejoin="round">
              <path d="M1 5.500H4L8.500 1.500V15.500L4 11.500H1Z" />
              <path d="M11.500 6C12.800 7.500 12.800 9.500 11.500 11M14 3.500c2.600 3 2.600 7 0 10M16.800 1.200c4.300 4.300 4.300 10.300 0 14.600" />
            </g>
          </svg>
        </Slot>
        <Slot $w={24} $ml={6}>
          <svg width="21" height="17" viewBox="0 0 21 17">
            <path d="M9.500 5H16.500Q18 5 18 6.500V13.500Q18 15 16.500 15H3.500Q2 15 2 13.500" fill="none" stroke="#1f1f1f" strokeWidth="1.300" />
            <path d="M18.500 8H19.500Q20.500 8 20.500 10T19.500 12H18.500Z" fill="#1f1f1f" />
            <path d="M6 0C10 4 9.500 9 6 11.500L3 14 2.500 13 4 11C-.5 11 .2 6 1.500 4.500L3 5.500C3 3 4.500 1.500 6 0Z" fill="#1f1f1f" />
          </svg>
        </Slot>
        <Lines $w={80} $ml={15} $align="flex-end">
          <Fit w={36} size={14.5}>12:32</Fit>
          <Fit w={77} size={14.5}>12-03-2025</Fit>
        </Lines>
      </Tray>
    </Taskbar>
  );
}

export default function App() {
  return (
    <>
      <GlobalStyle />
      <Screen>
        <BrowserChrome />
        <SchoolSite />
        <WindowsTaskbar />
      </Screen>
    </>
  );
}
